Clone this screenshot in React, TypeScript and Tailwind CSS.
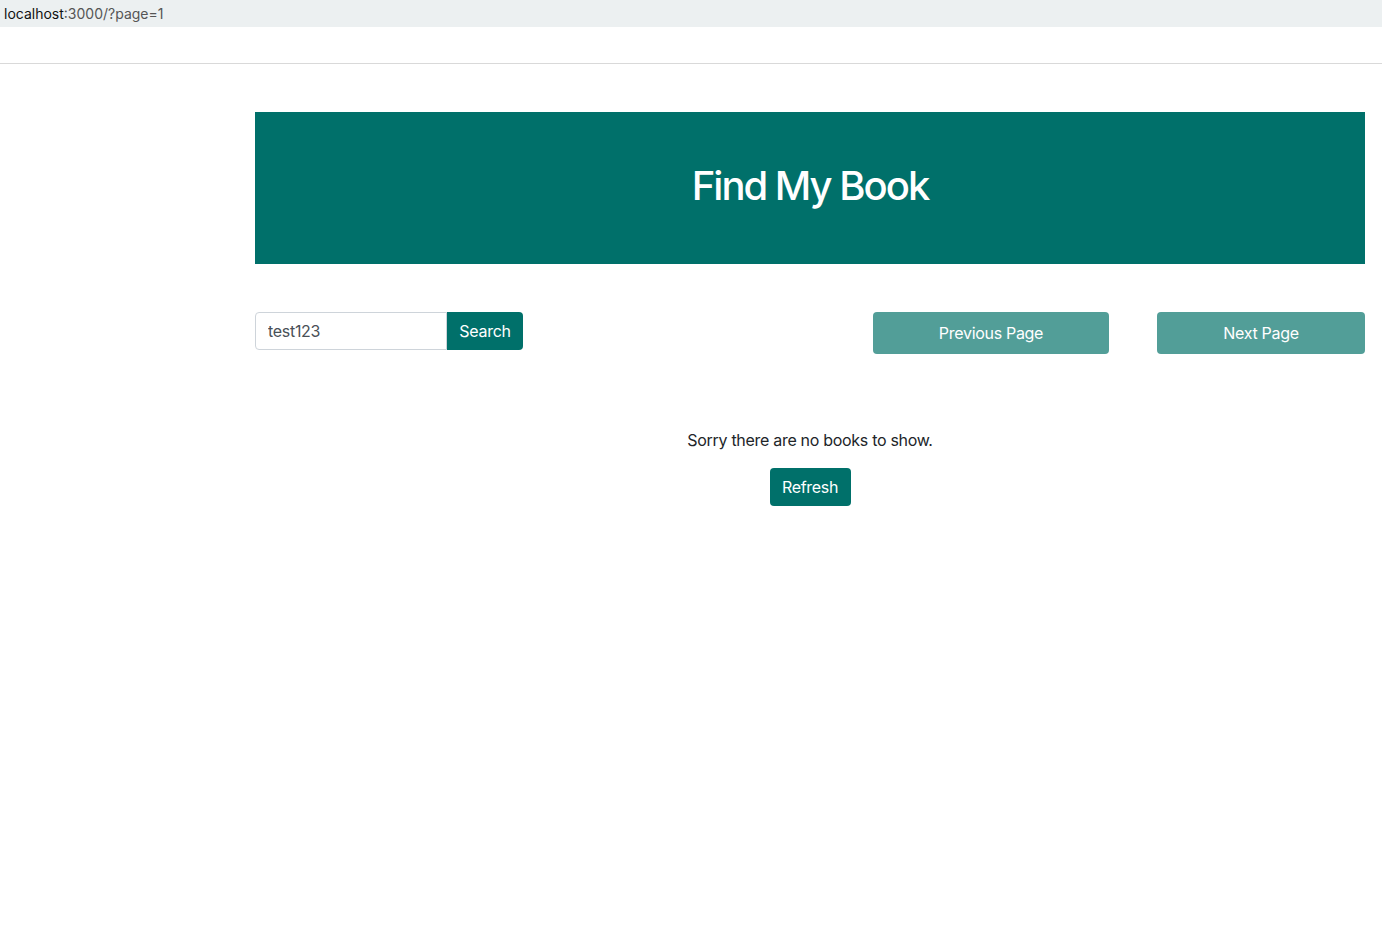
import { FC } from "react";

const App: FC = () => {
  return (
    <div className="min-h-[940px] bg-white text-[#212529] font-['Inter','Liberation_Sans',sans-serif] tracking-[-0.3px]">
      <div className="h-[27px] bg-[#ecf0f1] flex items-center px-[4px] text-[14px] tracking-normal text-[#555]">
        <span className="text-[#111]">localhost</span>
        <span>:3000/?page=1</span>
      </div>
      <div className="h-[37px] border-b border-[#d9d9d9]"></div>
      <div className="ml-[255px] w-[1110px] pt-[48px]">
        <div className="h-[152px] bg-[#00706a] flex items-center justify-center pb-[4px]">
          <h1 className="text-white text-[40px] font-medium tracking-[-2px]">Find My Book</h1>
        </div>
        <div className="mt-[48px] flex items-start justify-between">
          <div className="flex">
            <input
              type="text"
              defaultValue="test123"
              className="w-[192px] h-[38px] border border-[#ced4da] rounded-l-[4px] px-[12px] text-[16px] text-[#495057] outline-none"
            />
            <button className="w-[76px] h-[38px] bg-[#00706a] text-white text-[16px] rounded-r-[4px]">
              Search
            </button>
          </div>
          <div className="flex gap-[48px]">
            <button className="w-[236px] h-[42px] bg-[#529e98] text-white text-[16px] rounded-[4px]">
              Previous Page
            </button>
            <button className="w-[208px] h-[42px] bg-[#529e98] text-white text-[16px] rounded-[4px]">
              Next Page
            </button>
          </div>
        </div>
        <div className="mt-[74px] flex flex-col items-center">
          <p className="text-[16px] leading-[24px]">Sorry there are no books to show.</p>
          <button className="mt-[16px] w-[81px] h-[38px] bg-[#00706a] text-white text-[16px] rounded-[4px]">
            Refresh
          </button>
        </div>
      </div>
    </div>
  );
};

export default App;
